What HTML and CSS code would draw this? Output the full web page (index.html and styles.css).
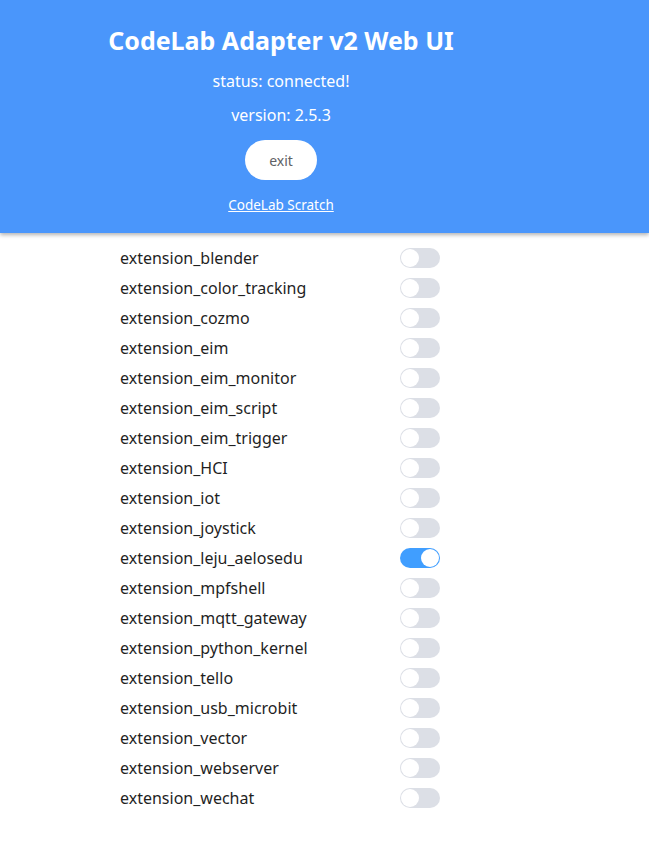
FILE: index.html
```html
<!DOCTYPE html>
<html>
<head>
<meta charset="utf-8">
<link rel="stylesheet" href="styles.css">
</head>
<body>
<header class="header">
  <div class="header-inner">
    <h1 class="title">CodeLab Adapter v2 Web UI</h1>
    <p class="status">status: connected!</p>
    <p class="version">version: 2.5.3</p>
    <button class="exit">exit</button>
    <a class="link" href="#">CodeLab Scratch</a>
  </div>
</header>
<ul class="list">
  <li class="row"><span class="name">extension_blender</span><span class="switch"></span></li>
  <li class="row"><span class="name">extension_color_tracking</span><span class="switch"></span></li>
  <li class="row"><span class="name">extension_cozmo</span><span class="switch"></span></li>
  <li class="row"><span class="name">extension_eim</span><span class="switch"></span></li>
  <li class="row"><span class="name">extension_eim_monitor</span><span class="switch"></span></li>
  <li class="row"><span class="name">extension_eim_script</span><span class="switch"></span></li>
  <li class="row"><span class="name">extension_eim_trigger</span><span class="switch"></span></li>
  <li class="row"><span class="name">extension_HCI</span><span class="switch"></span></li>
  <li class="row"><span class="name">extension_iot</span><span class="switch"></span></li>
  <li class="row"><span class="name">extension_joystick</span><span class="switch"></span></li>
  <li class="row"><span class="name">extension_leju_aelosedu</span><span class="switch on"></span></li>
  <li class="row"><span class="name">extension_mpfshell</span><span class="switch"></span></li>
  <li class="row"><span class="name">extension_mqtt_gateway</span><span class="switch"></span></li>
  <li class="row"><span class="name">extension_python_kernel</span><span class="switch"></span></li>
  <li class="row"><span class="name">extension_tello</span><span class="switch"></span></li>
  <li class="row"><span class="name">extension_usb_microbit</span><span class="switch"></span></li>
  <li class="row"><span class="name">extension_vector</span><span class="switch"></span></li>
  <li class="row"><span class="name">extension_webserver</span><span class="switch"></span></li>
  <li class="row"><span class="name">extension_wechat</span><span class="switch"></span></li>
</ul>
</body>
</html>
```
FILE: styles.css
```css
* { box-sizing: border-box; }
body {
  margin: 0;
  font-family: "Noto Sans", "Open Sans", sans-serif;
  background: #fff;
  color: #1f1f1f;
}
.header {
  background: #4a96fb;
  height: 233px;
  box-shadow: 0 2px 4px rgba(0,0,0,0.3);
  color: #fff;
}
.header-inner {
  width: 562px;
  display: flex;
  flex-direction: column;
  align-items: center;
  padding-top: 22px;
}
.title {
  margin: 0;
  font-size: 25px;
  font-weight: bold;
  line-height: 36px;
}
.status {
  margin: 5px 0 0;
  font-size: 16px;
  line-height: 36px;
}
.version {
  margin: -2px 0 0;
  font-size: 16px;
  line-height: 36px;
}
.exit {
  margin-top: 7px;
  width: 72px;
  height: 40px;
  border: none;
  border-radius: 20px;
  background: #fff;
  color: #606266;
  font-family: inherit;
  font-size: 14px;
}
.link {
  margin-top: 15px;
  color: #fff;
  font-size: 13.5px;
  line-height: 20px;
}
.list {
  list-style: none;
  margin: 0;
  padding: 10px 0 0 120px;
}
.row {
  display: flex;
  align-items: center;
  height: 30px;
}
.name {
  width: 280px;
  font-size: 16px;
}
.switch {
  position: relative;
  width: 40px;
  height: 20px;
  border-radius: 10px;
  background: #dcdfe6;
}
.switch::after {
  content: "";
  position: absolute;
  top: 1px;
  left: 1px;
  width: 18px;
  height: 18px;
  border-radius: 50%;
  background: #fff;
}
.switch.on { background: #409eff; }
.switch.on::after { left: 21px; }
```
